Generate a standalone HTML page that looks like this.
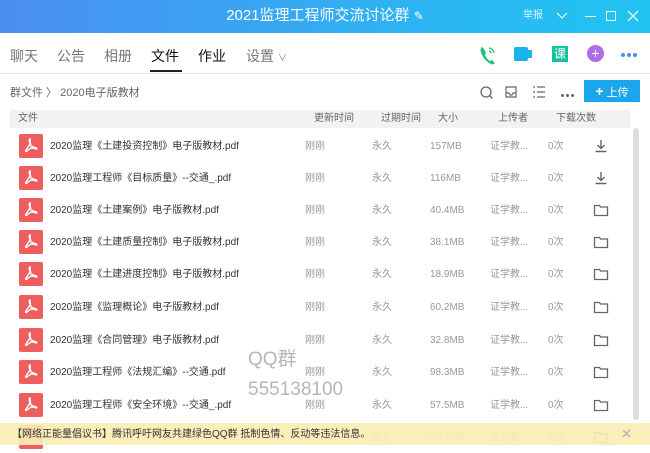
<!DOCTYPE html>
<html><head><meta charset="utf-8"><style>
*{margin:0;padding:0;box-sizing:border-box}
body{width:650px;height:445px;overflow:hidden;background:#fff;font-family:"Liberation Sans","Noto Sans CJK SC",sans-serif;position:relative;color:#333;line-height:1.2}
.title{position:absolute;left:0;top:0;width:650px;height:33px;background:linear-gradient(90deg,#4a8ef2,#2ab8f2 70%,#22c3f2);color:#fff}
.title .t{position:absolute;left:0;width:650px;text-align:center;top:7px;font-size:15px;line-height:18px}
.tabs{position:absolute;top:47px;left:10px;font-size:14px;color:#777;line-height:18px}
.tabs span{position:absolute;white-space:nowrap}
.abs{position:absolute}
.hdr{position:absolute;left:10px;top:110px;width:620px;height:18px;background:#f2f2f2;font-size:10px;color:#666;line-height:12px}
.row{position:absolute;left:10px;width:620px;height:32px;font-size:10px;color:#999;line-height:12px}
.row .ic{position:absolute;left:9px;top:4px;width:24px;height:24px;background:#ee5e5e;border-radius:2px}
.row .n{position:absolute;left:40px;top:11px;color:#333;white-space:nowrap}
.row span{position:absolute;top:11px;white-space:nowrap}
.row svg.f{position:absolute;left:583px;top:9px}
.dots i{display:inline-block;width:4px;height:4px;border-radius:50%;margin-right:2px}
</style></head><body>
<svg width="0" height="0" style="position:absolute"><defs>
<symbol id="pdf" viewBox="0 0 24 24"><path d="M11 5c-1 0 -1 2 0 5l-4 6c-1 1 0 2 1 1l4-3c2 0 4 0 5 1 1 0 1-1 0-1l-5-2c-1-3-1-6-1-7z" fill="none" stroke="#fff" stroke-width="1.4"/></symbol>
<symbol id="fold" viewBox="0 0 16 14"><path d="M1.5 2.5h5l1 1.5h7v8.5h-13z" fill="none" stroke="#666" stroke-width="1.3"/></symbol>
<symbol id="dl" viewBox="0 0 16 14"><path d="M8 1v8M4.5 6l3.5 3.5 3.5-3.5M2.5 12.5h11" fill="none" stroke="#666" stroke-width="1.4"/></symbol>
</defs></svg>
<div class="title"><div class="t">2021监理工程师交流讨论群 <span style="font-size:12px">✎</span></div>
<span class="abs" style="left:523px;top:10px;font-size:10px;line-height:12px;opacity:.85">举报</span>
<svg class="abs" style="left:556px;top:12px" width="12" height="8"><path d="M1 1l5 5 5-5" stroke="#fff" fill="none"/></svg>
<div class="abs" style="left:585px;top:16px;width:11px;height:1px;background:#fff"></div>
<div class="abs" style="left:606px;top:11px;width:10px;height:10px;border:1px solid #fff"></div>
<svg class="abs" style="left:627px;top:10px" width="12" height="12"><path d="M1 1l10 10M11 1l-10 10" stroke="#fff" stroke-width="1.2"/></svg>
</div>
<div class="tabs">
<span style="left:0">聊天</span><span style="left:47px">公告</span><span style="left:94px">相册</span><span style="left:141px;color:#111">文件</span><span style="left:188px;color:#111">作业</span><span style="left:236px">设置 <small style="font-size:9px">∨</small></span>
</div>
<div class="abs" style="left:150px;top:70px;width:32px;height:2px;background:#222"></div>
<div class="abs" style="left:0;top:73px;width:650px;height:1px;background:#e5e5e5"></div>
<svg class="abs" style="left:478px;top:44px" width="20" height="22" viewBox="0 0 20 22"><path d="M4 3c-2 1-2 4 0 8s6 8 9 9c2 1 3 0 4-1l-3-3-2 1c-2-1-4-4-5-6l1-2-2-4z" fill="#2bc17c"/><path d="M11 4a6 6 0 0 1 5 5M11 7a3 3 0 0 1 2 2" stroke="#2bc17c" fill="none" stroke-width="1.4"/></svg>
<div class="abs" style="left:514px;top:47px;width:14px;height:14px;background:#1bb3ec;border-radius:2px"></div><div class="abs" style="left:528px;top:50px;width:4px;height:8px;background:#1bb3ec"></div>
<div class="abs" style="left:552px;top:46px;width:16px;height:16px;background:#19c0a0;color:#fff;font-size:12px;text-align:center;line-height:16px">课</div>
<div class="abs" style="left:587px;top:45px;width:17px;height:17px;background:#b06ee6;border-radius:50%;color:#fff;font-size:14px;text-align:center;line-height:17px">+</div>
<div class="abs dots" style="left:621px;top:51px;line-height:4px"><i style="background:#4a8ef2"></i><i style="background:#4a8ef2"></i><i style="background:#4a8ef2"></i></div>
<div class="abs" style="left:10px;top:86px;font-size:11px;color:#666;line-height:14px">群文件 〉 2020电子版教材</div>
<svg class="abs" style="left:478px;top:84px" width="80" height="16"><circle cx="8" cy="8" r="5" stroke="#666" fill="none" stroke-width="1.3"/><path d="M11.5 11.5l3 3" stroke="#666" stroke-width="1.3"/><path d="M28 3h10v10h-10zM28 9h3l1 2h2l1-2h3" stroke="#666" fill="none" stroke-width="1.2"/><path d="M55 3h2M59 3h8M55 8h2M59 8h8M55 13h2M59 13h8" stroke="#666" stroke-width="1.2"/></svg>
<div class="abs dots" style="left:561px;top:91px;line-height:3px"><i style="background:#666;width:3px;height:3px"></i><i style="background:#666;width:3px;height:3px"></i><i style="background:#666;width:3px;height:3px"></i></div>
<div class="abs" style="left:584px;top:80px;width:56px;height:22px;background:#1ba6ec;color:#fff;font-size:11px;line-height:22px;text-align:center"><b style="font-size:14px">+</b> 上传</div>
<div class="hdr"><span class="abs" style="left:8px;top:3px">文件</span><span class="abs" style="left:304px;top:3px">更新时间</span><span class="abs" style="left:371px;top:3px">过期时间</span><span class="abs" style="left:428px;top:3px">大小</span><span class="abs" style="left:488px;top:3px">上传者</span><span class="abs" style="left:546px;top:3px">下载次数</span></div>
<div class="abs" style="left:633px;top:128px;width:6px;height:292px;background:#ddd;border-radius:3px"></div>
<div class="row" style="top:130px"><div class="ic"><svg width="24" height="24"><use href="#pdf"/></svg></div><div class="n">2020监理《土建投资控制》电子版教材.pdf</div><span style="left:295px">刚刚</span><span style="left:362px">永久</span><span style="left:420px">157MB</span><span style="left:480px">证学教...</span><span style="left:538px">0次</span><svg class="f" width="16" height="14"><use href="#dl"/></svg></div>
<div class="row" style="top:162px"><div class="ic"><svg width="24" height="24"><use href="#pdf"/></svg></div><div class="n">2020监理工程师《目标质量》--交通_.pdf</div><span style="left:295px">刚刚</span><span style="left:362px">永久</span><span style="left:420px">116MB</span><span style="left:480px">证学教...</span><span style="left:538px">0次</span><svg class="f" width="16" height="14"><use href="#dl"/></svg></div>
<div class="row" style="top:194px"><div class="ic"><svg width="24" height="24"><use href="#pdf"/></svg></div><div class="n">2020监理《土建案例》电子版教材.pdf</div><span style="left:295px">刚刚</span><span style="left:362px">永久</span><span style="left:420px">40.4MB</span><span style="left:480px">证学教...</span><span style="left:538px">0次</span><svg class="f" width="16" height="14"><use href="#fold"/></svg></div>
<div class="row" style="top:226px"><div class="ic"><svg width="24" height="24"><use href="#pdf"/></svg></div><div class="n">2020监理《土建质量控制》电子版教材.pdf</div><span style="left:295px">刚刚</span><span style="left:362px">永久</span><span style="left:420px">38.1MB</span><span style="left:480px">证学教...</span><span style="left:538px">0次</span><svg class="f" width="16" height="14"><use href="#fold"/></svg></div>
<div class="row" style="top:258px"><div class="ic"><svg width="24" height="24"><use href="#pdf"/></svg></div><div class="n">2020监理《土建进度控制》电子版教材.pdf</div><span style="left:295px">刚刚</span><span style="left:362px">永久</span><span style="left:420px">18.9MB</span><span style="left:480px">证学教...</span><span style="left:538px">0次</span><svg class="f" width="16" height="14"><use href="#fold"/></svg></div>
<div class="row" style="top:291px"><div class="ic"><svg width="24" height="24"><use href="#pdf"/></svg></div><div class="n">2020监理《监理概论》电子版教材.pdf</div><span style="left:295px">刚刚</span><span style="left:362px">永久</span><span style="left:420px">60.2MB</span><span style="left:480px">证学教...</span><span style="left:538px">0次</span><svg class="f" width="16" height="14"><use href="#fold"/></svg></div>
<div class="row" style="top:324px"><div class="ic"><svg width="24" height="24"><use href="#pdf"/></svg></div><div class="n">2020监理《合同管理》电子版教材.pdf</div><span style="left:295px">刚刚</span><span style="left:362px">永久</span><span style="left:420px">32.8MB</span><span style="left:480px">证学教...</span><span style="left:538px">0次</span><svg class="f" width="16" height="14"><use href="#fold"/></svg></div>
<div class="row" style="top:356px"><div class="ic"><svg width="24" height="24"><use href="#pdf"/></svg></div><div class="n">2020监理工程师《法规汇编》--交通.pdf</div><span style="left:295px">刚刚</span><span style="left:362px">永久</span><span style="left:420px">98.3MB</span><span style="left:480px">证学教...</span><span style="left:538px">0次</span><svg class="f" width="16" height="14"><use href="#fold"/></svg></div>
<div class="row" style="top:389px"><div class="ic"><svg width="24" height="24"><use href="#pdf"/></svg></div><div class="n">2020监理工程师《安全环境》--交通_.pdf</div><span style="left:295px">刚刚</span><span style="left:362px">永久</span><span style="left:420px">57.5MB</span><span style="left:480px">证学教...</span><span style="left:538px">0次</span><svg class="f" width="16" height="14"><use href="#fold"/></svg></div>
<div class="row" style="top:421px"><div class="ic"></div><span style="left:362px">永久</span><span style="left:420px">90.7MB</span><span style="left:480px">证学教...</span><span style="left:538px">0次</span><svg class="f" width="16" height="14"><use href="#fold"/></svg></div>
<div class="abs" style="left:248px;top:345px;font-size:19px;color:#aaa;line-height:30px;opacity:.85">QQ群<br>555138100</div>
<div class="abs" style="left:0;top:423px;width:650px;height:22px;background:rgba(250,238,180,.92);font-size:10px;color:#333;padding:6px 0 0 12px;line-height:12px">【网络正能量倡议书】腾讯呼吁网友共建绿色QQ群 抵制色情、反动等违法信息。<svg class="abs" style="left:622px;top:6px" width="9" height="9"><path d="M1 1l7 7M8 1l-7 7" stroke="#aaa" stroke-width="1.2"/></svg></div>
</body></html>
